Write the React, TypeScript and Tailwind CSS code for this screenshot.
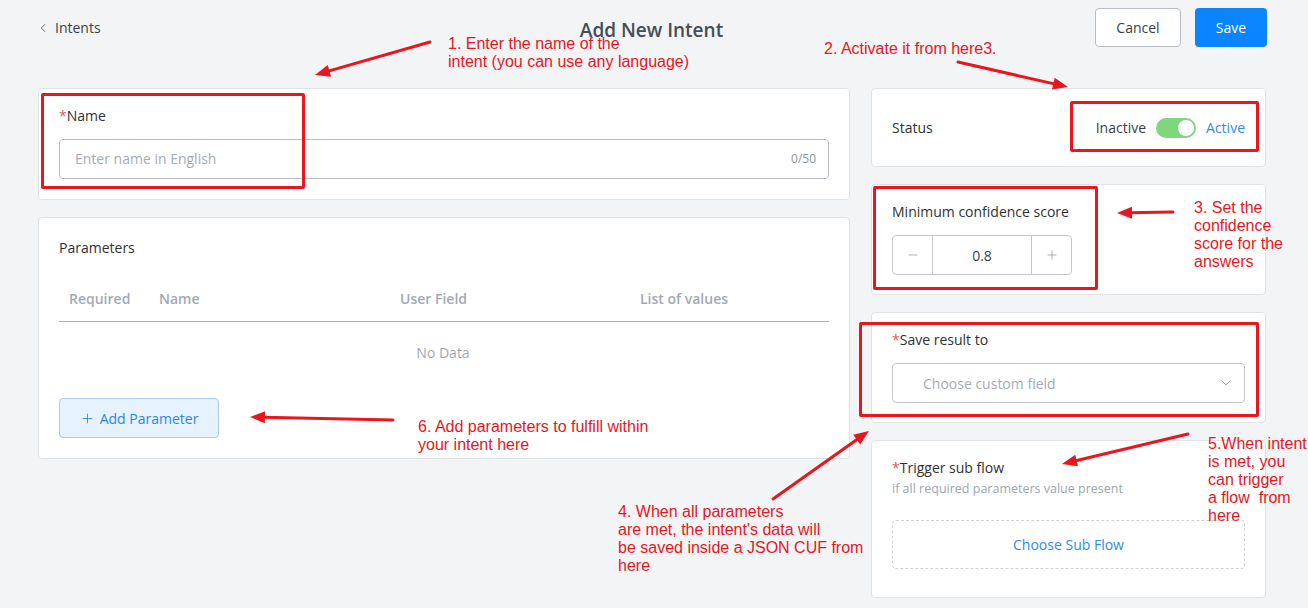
import React from "react";
import { ChevronLeft, ChevronDown, Minus, Plus } from "lucide-react";

const UI = { fontFamily: '"Open Sans", "Noto Sans", sans-serif' };
const NOTE = { fontFamily: '"Liberation Sans", Arial, sans-serif' };

const RED = "#e8161e";

type Pt = [number, number];

function Arrow({ from, to }: { from: Pt; to: Pt }) {
  const [x1, y1] = from;
  const [x2, y2] = to;
  const dx = x2 - x1;
  const dy = y2 - y1;
  const len = Math.hypot(dx, dy);
  const ux = dx / len;
  const uy = dy / len;
  const head = 15;
  const half = 6;
  const bx = x2 - ux * head;
  const by = y2 - uy * head;
  const p1 = `${x2},${y2}`;
  const p2 = `${bx - uy * half},${by + ux * half}`;
  const p3 = `${bx + uy * half},${by - ux * half}`;
  return (
    <g>
      <line x1={x1} y1={y1} x2={bx + ux * 2} y2={by + uy * 2} stroke={RED} strokeWidth={3} strokeLinecap="round" />
      <polygon points={`${p1} ${p2} ${p3}`} fill={RED} />
    </g>
  );
}

function Card({ className = "", children }: { className?: string; children: React.ReactNode }) {
  return <div className={`bg-white border border-[#dfe2e7] rounded-[4px] ${className}`}>{children}</div>;
}

function Label({ children, required = false }: { children: React.ReactNode; required?: boolean }) {
  return (
    <div className="text-[14px] leading-[20px] text-[#303133]">
      {required && <span className="text-[#e0575b]">*</span>}
      {children}
    </div>
  );
}

export default function App() {
  return (
    <div className="relative w-[1308px] h-[608px] overflow-hidden bg-[#f3f4f6]" style={UI}>
      {/* header */}
      <div className="pt-[8px] pl-[36px] pr-[41px] grid grid-cols-[1fr_auto_1fr] items-center h-[47px]">
        <div className="flex items-center gap-[5px] text-[14px] text-[#3a3f45]">
          <ChevronLeft size={14} strokeWidth={1.5} className="text-[#555]" />
          <span>Intents</span>
        </div>
        <div className="text-[19px] font-semibold text-[#454d55] pt-[6px]">Add New Intent</div>
        <div className="flex justify-end gap-[14px]">
          <button className="h-[39px] w-[86px] rounded-[4px] border border-[#b8bcc2] bg-white text-[14px] text-[#3a3f45]">
            Cancel
          </button>
          <button className="h-[39px] w-[72px] rounded-[4px] bg-[#0a84ff] text-[14px] text-white">Save</button>
        </div>
      </div>

      {/* body */}
      <div className="mt-[41px] pl-[38px] pr-[42px] flex gap-[21px] items-start">
        {/* left column */}
        <div className="w-[812px] flex flex-col gap-[17px]">
          <Card className="pt-[17px] px-[20px] pb-[20px]">
            <Label required>Name</Label>
            <div className="mt-[13px] h-[40px] border border-[#b9bdc3] rounded-[4px] flex items-center justify-between pl-[15px] pr-[12px]">
              <span className="text-[14px] text-[#a6abb3] -mt-[2px]">Enter name in English</span>
              <span className="text-[12px] text-[#8d939b]">0/50</span>
            </div>
          </Card>

          <Card className="pt-[20px] px-[20px] pb-[20px]">
            <Label>Parameters</Label>
            <div className="mt-[18px] h-[46px] border-b border-[#a9adb5] grid grid-cols-[90px_241px_240px_1fr] items-center text-[14px] font-semibold text-[#a3a9b3]">
              <div className="pl-[10px]">Required</div>
              <div className="pl-[10px]">Name</div>
              <div className="pl-[10px]">User Field</div>
              <div className="pl-[10px]">List of values</div>
            </div>
            <div className="h-[60px] flex items-center justify-center text-[14px] text-[#a3a9b3]">
              <span className="mr-[2px]">No Data</span>
            </div>
            <button className="mt-[16px] h-[40px] w-[160px] rounded-[4px] border border-[#a7cdf2] bg-[#e6f2fd] flex items-center justify-center gap-[5px] text-[14px] text-[#2f86e0]">
              <Plus size={15} strokeWidth={1.4} />
              <span>Add Parameter</span>
            </button>
          </Card>
        </div>

        {/* right column */}
        <div className="w-[395px] flex flex-col gap-[17px]">
          <Card className="h-[79px] px-[20px] flex items-center justify-between">
            <span className="text-[14px] text-[#303133]">Status</span>
            <div className="flex items-center gap-[10px] text-[14px]">
              <span className="text-[#3a3f45]">Inactive</span>
              <div className="w-[40px] h-[20px] rounded-full bg-[#7ed77b] flex items-center justify-end pr-[2px]">
                <div className="w-[16px] h-[16px] rounded-full bg-white" />
              </div>
              <span className="text-[#2d8cf0]">Active</span>
            </div>
          </Card>

          <Card className="pt-[17px] px-[20px] pb-[19px]">
            <Label>Minimum confidence score</Label>
            <div className="mt-[13px] w-[180px] h-[40px] border border-[#c4c8cd] rounded-[4px] flex text-[#555b63]">
              <div className="w-[40px] flex items-center justify-center border-r border-[#c4c8cd]">
                <Minus size={14} strokeWidth={1.2} className="text-[#8a9098]" />
              </div>
              <div className="flex-1 flex items-center justify-center text-[14px] text-[#3a3f45]">0.8</div>
              <div className="w-[40px] flex items-center justify-center border-l border-[#c4c8cd]">
                <Plus size={14} strokeWidth={1.2} className="text-[#8a9098]" />
              </div>
            </div>
          </Card>

          <Card className="pt-[17px] px-[20px] pb-[19px]">
            <Label required>Save result to</Label>
            <div className="mt-[13px] h-[40px] border border-[#c4c8cd] rounded-[4px] flex items-center justify-between pl-[30px] pr-[10px]">
              <span className="text-[14px] text-[#a6abb3]">Choose custom field</span>
              <ChevronDown size={16} strokeWidth={1.2} className="text-[#9aa0a8]" />
            </div>
          </Card>

          <Card className="pt-[17px] px-[20px] pb-[28px]">
            <Label required>Trigger sub flow</Label>
            <div className="mt-[3px] text-[12.5px] leading-[16px] text-[#a0a6ae]">if all required parameters value present</div>
            <div className="mt-[23px] h-[49px] border border-dashed border-[#cfd3d8] rounded-[4px] flex items-center justify-center text-[14px] text-[#2d8cf0]">
              Choose Sub Flow
            </div>
          </Card>
        </div>
      </div>

      {/* annotation layer */}
      <div className="absolute left-[41px] top-[93px] w-[264px] h-[96px] border-[3px] border-[#e8161e] rounded-[2px]" />
      <div className="absolute left-[1070px] top-[101px] w-[189px] h-[51px] border-[3px] border-[#e8161e] rounded-[2px]" />
      <div className="absolute left-[873px] top-[186px] w-[225px] h-[104px] border-[3px] border-[#e8161e] rounded-[2px]" />
      <div className="absolute left-[859px] top-[322px] w-[400px] h-[95px] border-[3px] border-[#e8161e] rounded-[2px]" />

      <svg className="absolute left-0 top-0 pointer-events-none" width={1308} height={608}>
        <Arrow from={[430, 42]} to={[315, 75]} />
        <Arrow from={[958, 62]} to={[1068, 87]} />
        <Arrow from={[1173, 212]} to={[1117, 213]} />
        <Arrow from={[393, 420]} to={[250, 417]} />
        <Arrow from={[773, 499]} to={[869, 431]} />
        <Arrow from={[1188, 434]} to={[1062, 464]} />
      </svg>

      <div className="absolute left-[448px] top-[35px] text-[16px] leading-[18px] text-[#e8161e]" style={NOTE}>
        1. Enter the name of the
        <br />
        intent (you can use any language)
      </div>
      <div className="absolute left-[824px] top-[40px] text-[16px] leading-[18px] text-[#e8161e]" style={NOTE}>
        2. Activate it from here3.
      </div>
      <div className="absolute left-[1194px] top-[199px] text-[16px] leading-[18px] text-[#e8161e]" style={NOTE}>
        3. Set the
        <br />
        confidence
        <br />
        score for the
        <br />
        answers
      </div>
      <div className="absolute left-[418px] top-[418px] text-[16px] leading-[18px] text-[#e8161e]" style={NOTE}>
        6. Add parameters to fulfill within
        <br />
        your intent here
      </div>
      <div className="absolute left-[618px] top-[503px] text-[16px] leading-[18px] text-[#e8161e]" style={NOTE}>
        4. When all parameters
        <br />
        are met, the intent's data will
        <br />
        be saved inside a JSON CUF from
        <br />
        here
      </div>
      <div className="absolute left-[1208px] top-[435px] text-[16px] leading-[18px] text-[#e8161e] whitespace-pre" style={NOTE}>
        {"5.When intent\nis met, you\ncan trigger\na flow  from\nhere"}
      </div>
    </div>
  );
}
